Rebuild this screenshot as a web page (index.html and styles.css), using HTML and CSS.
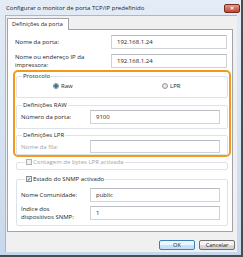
FILE: index.html
```html
<!DOCTYPE html>
<html lang="pt">
<head>
    <meta charset="UTF-8">
    <meta name="viewport" content="width=device-width, initial-scale=1.0">
    <title>Configurar o monitor de porta TCP/IP predefinido</title>
    <link rel="stylesheet" href="styles.css">
</head>
<body>

    <div class="window">
        <div class="titlebar">
            <span class="title">Configurar o monitor de porta TCP/IP predefinido</span>
            <span class="close-btn">&#x2715;</span>
        </div>

        <div class="client">
            <div class="tabs">
                <div class="tab">Definições da porta</div>
            </div>

            <div class="panel">
                <div class="row row-first">
                    <label class="label">Nome da porta:</label>
                    <div class="input wide">192.168.1.24</div>
                </div>
                <div class="row row-two">
                    <label class="label">Nome ou endereço IP da<br>impressora:</label>
                    <div class="input wide">192.168.1.24</div>
                </div>

                <div class="highlight">
                    <fieldset class="group group-protocol">
                        <legend>Protocolo</legend>
                        <div class="radios">
                            <span class="option"><span class="radio checked"></span>Raw</span>
                            <span class="option"><span class="radio"></span>LPR</span>
                        </div>
                    </fieldset>

                    <fieldset class="group group-raw">
                        <legend>Definições RAW</legend>
                        <div class="row inner-row">
                            <label class="label">Número da porta:</label>
                            <div class="input narrow">9100</div>
                        </div>
                    </fieldset>

                    <fieldset class="group group-lpr">
                        <legend>Definições LPR</legend>
                        <div class="row inner-row">
                            <label class="label disabled">Nome da fila:</label>
                            <div class="input narrow short"></div>
                        </div>
                    </fieldset>
                </div>

                <fieldset class="group group-count">
                    <legend class="check-legend disabled"><span class="checkbox"></span>Contagem de bytes LPR activada</legend>
                </fieldset>

                <fieldset class="group group-snmp">
                    <legend class="check-legend"><span class="checkbox checked">&#x2713;</span>Estado do SNMP activado</legend>
                    <div class="row inner-row snmp-first">
                        <label class="label">Nome Comunidade:</label>
                        <div class="input narrow">public</div>
                    </div>
                    <div class="row inner-row snmp-second">
                        <label class="label">Índice dos<br>dispositivos SNMP:</label>
                        <div class="input narrow">1</div>
                    </div>
                </fieldset>
            </div>

            <div class="buttons">
                <button class="btn btn-default">OK</button>
                <button class="btn">Cancelar</button>
            </div>
        </div>
    </div>

</body>
</html>
```

FILE: styles.css
```css
* {
    box-sizing: border-box;
}

body {
    margin: 0;
    font-family: "Open Sans", "Noto Sans", sans-serif;
    font-size: 6px;
    color: #1e1e1e;
    background-color: #444;
}

.window {
    width: 243px;
    height: 257px;
    display: flex;
    flex-direction: column;
    background: linear-gradient(#e4ecf6, #c8d8ec);
    border-right: 2px solid #4c4c4c;
    border-bottom: 2px solid #4c4c4c;
    padding: 0 4px 3px 5px;
}

.titlebar {
    height: 15px;
    display: flex;
    align-items: flex-start;
    justify-content: space-between;
}

.title {
    margin-top: 4px;
    margin-left: 1px;
    line-height: 8px;
    color: #1a1a1a;
}

.close-btn {
    width: 16px;
    height: 9px;
    margin-top: 4px;
    margin-right: -3px;
    background: linear-gradient(#e29a8b, #c0452f);
    border: 1px solid #7a2a1e;
    border-radius: 2px;
    color: #fff;
    font-size: 5px;
    line-height: 7px;
    text-align: center;
    font-weight: bold;
}

.client {
    flex: 1;
    display: flex;
    flex-direction: column;
    background-color: #f0f0f0;
    padding: 2px 4px 0 1px;
    border: 1px solid #a8b8cc;
    border-bottom: none;
    border-right: none;
}

.tabs {
    display: flex;
}

.tab {
    position: relative;
    height: 12px;
    margin-bottom: -1px;
    background-color: #fff;
    border: 1px solid #a0a3aa;
    border-bottom: none;
    padding: 0 5px 0 4px;
    line-height: 10px;
    font-size: 5.6px;
    white-space: nowrap;
}

.panel {
    height: 203px;
    background-color: #fff;
    border: 1px solid #a0a3aa;
    padding: 5px 5px 0 7px;
}

.row {
    display: flex;
    align-items: center;
    justify-content: space-between;
}

.row-first {
    height: 14px;
}

.row-two {
    margin-top: 4px;
    height: 16px;
}

.label {
    line-height: 8px;
}

.label.disabled {
    color: #a3a3a3;
}

.input {
    height: 14px;
    border: 1px solid #cfd3d8;
    border-top-color: #b9bdc3;
    background-color: #fff;
    padding-left: 5px;
    line-height: 12px;
}

.input.wide {
    width: 116px;
}

.input.narrow {
    width: 130px;
}

.input.short {
    height: 13px;
}

.highlight {
    margin: 1px -4px 0 -2px;
    border: 2px solid #f39a1e;
    border-radius: 5px;
    padding: 0 1px;
}

.group {
    margin: 0;
    padding: 0 7px 0 4px;
    border: 1px solid #dde3e8;
    border-radius: 2px;
}

.group legend {
    padding: 0 1px;
    margin-left: 1px;
    line-height: 8px;
}

.group-protocol {
    padding-top: 2px;
    padding-bottom: 7px;
}

.radios {
    display: grid;
    grid-template-columns: 109px auto;
    padding-left: 32px;
    height: 8px;
}

.option {
    display: flex;
    align-items: center;
    gap: 2px;
}

.radio {
    width: 6px;
    height: 6px;
    border-radius: 50%;
    border: 1px solid #9a9a9a;
    background: radial-gradient(#f4f4f4, #d0d0d0);
}

.radio.checked {
    background: radial-gradient(#2f6fa6 0 1.5px, #e4e4e4 2px);
    border-color: #8a8a8a;
}

.group-raw {
    margin-top: 3px;
    padding-top: 1px;
    padding-bottom: 4px;
}

.group-lpr {
    margin-top: 2px;
    padding-top: 1px;
    padding-bottom: 1px;
}

.inner-row {
    height: 14px;
}

.group-lpr .inner-row {
    height: 13px;
}

.group-count {
    margin: 1px -1px 0 1px;
    padding-bottom: 3px;
}

.check-legend {
    display: flex;
    align-items: center;
    gap: 1px;
}

.group .check-legend {
    margin-left: 4px;
}

.check-legend.disabled {
    color: #a3a3a3;
}

.checkbox {
    width: 6px;
    height: 6px;
    border: 1px solid #b0b0b0;
    background-color: #f2f2f2;
    font-size: 5px;
    line-height: 4px;
    text-align: center;
    color: #2a2a2a;
}

.checkbox.checked {
    border-color: #8a8a8a;
    background-color: #e8eef5;
}

.group-snmp {
    margin: 5px -1px 0 1px;
    padding-top: 5px;
    padding-bottom: 5px;
}

.snmp-first {
    height: 13px;
}

.snmp-second {
    margin-top: 5px;
}

.buttons {
    display: flex;
    justify-content: flex-end;
    gap: 4px;
    margin-top: 8px;
    margin-right: -2px;
}

.btn {
    width: 36px;
    height: 10px;
    padding: 0;
    font-family: inherit;
    font-size: 5.6px;
    line-height: 8px;
    color: #1e1e1e;
    background: linear-gradient(#f4f4f4 50%, #dcdcdc 50%, #cfcfcf);
    border: 1px solid #707070;
    border-radius: 2px;
}

.btn-default {
    border-color: #3c7fb1;
    background: linear-gradient(#eaf6fd 50%, #c8e4f6 50%, #bee0f8);
}
```
